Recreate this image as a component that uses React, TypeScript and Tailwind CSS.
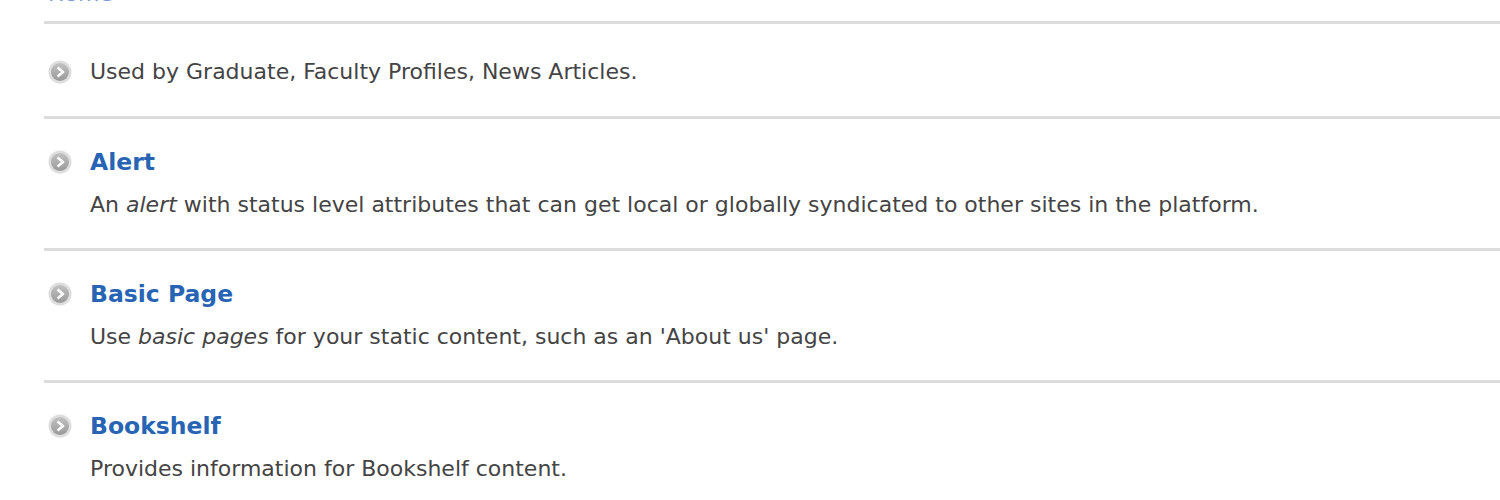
const font = { fontFamily: '"DejaVu Sans", Verdana, sans-serif' };

type Item = { title?: string; desc: React.ReactNode };

const items: Item[] = [
  { desc: 'Used by Graduate, Faculty Profiles, News Articles.' },
  {
    title: 'Alert',
    desc: (
      <>
        An <em>alert</em> with status level attributes that can get local or globally syndicated to other sites in the
        platform.
      </>
    ),
  },
  {
    title: 'Basic Page',
    desc: (
      <>
        Use <em>basic pages</em> for your static content, such as an 'About us' page.
      </>
    ),
  },
  { title: 'Bookshelf', desc: 'Provides information for Bookshelf content.' },
];

const Bullet = () => (
  <svg width="24" height="24" viewBox="0 0 24 24" className="shrink-0">
    <defs>
      <linearGradient id="bg" x1="0" y1="0" x2="0" y2="1">
        <stop offset="0" stopColor="#c2c2c2" />
        <stop offset="1" stopColor="#999" />
      </linearGradient>
    </defs>
    <circle cx="12" cy="12" r="11.5" fill="#dedede" />
    <circle cx="12" cy="12" r="9" fill="url(#bg)" />
    <path d="M9.5 7.5 L15 12 L9.5 16.5" fill="none" stroke="#fafafa" strokeWidth="2.8" strokeLinejoin="round" />
  </svg>
);

export default function App() {
  return (
    <div className="w-[1500px] h-[500px] overflow-hidden bg-white text-[#444]" style={font}>
      <div className="pl-[44px]">
        {/* breadcrumb link, mostly scrolled off the top */}
        <div className="-mt-[17px] pl-[4px] text-[22px] leading-[22px] text-[#7d9ad9]">Home</div>
        <ul className="mt-[16px]">
          {items.map((it, i) => (
            <li key={i} className="border-t-[3px] border-[#dcdcdc]">
              {it.title ? (
                <div className="pt-[30px] pb-[30px]">
                  <div className="flex items-center gap-[18px] pl-[4px]">
                    <Bullet />
                    <a className="text-[23.5px] leading-[26px] font-bold text-[#2864b4]">{it.title}</a>
                  </div>
                  <p className="pl-[46px] mt-[17px] text-[22px] leading-[26px]">{it.desc}</p>
                </div>
              ) : (
                <div className="flex items-center gap-[18px] pl-[4px] pt-[35px] pb-[31px]">
                  <Bullet />
                  <p className="text-[22px] leading-[26px]">{it.desc}</p>
                </div>
              )}
            </li>
          ))}
        </ul>
      </div>
    </div>
  );
}
